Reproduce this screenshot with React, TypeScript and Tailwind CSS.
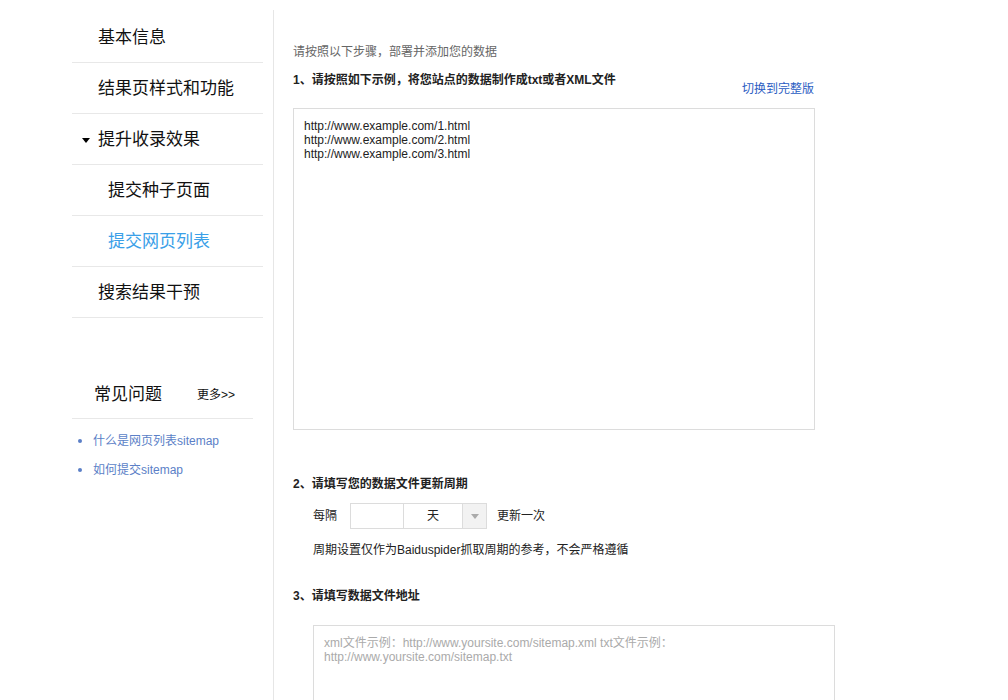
import React from "react";

const F = { fontFamily: '"Liberation Sans", Arial, "Noto Sans CJK SC", sans-serif' };

function NavItem({ label, indent = false, active = false, caret = false }: { label: string; indent?: boolean; active?: boolean; caret?: boolean }) {
  return (
    <div className="h-[51px] border-b border-[#e8e8e8] flex items-center pt-[2px]">
      <div className={`flex items-center ${indent ? "pl-[36px]" : caret ? "pl-[10px]" : "pl-[26px]"}`}>
        {caret && (
          <svg width="8" height="5" viewBox="0 0 8 5" className="mr-[8px]">
            <path d="M0 0 L8 0 L4 5 Z" fill="#000" />
          </svg>
        )}
        <span className={`text-[17px] ${active ? "text-[#3aa0e8]" : "text-[#111]"}`}>{label}</span>
      </div>
    </div>
  );
}

export default function App() {
  return (
    <div className="w-[1008px] h-[700px] overflow-hidden bg-white flex" style={F}>
      <aside className="w-[273px] shrink-0 pl-[72px] pr-[10px] pt-[12px]">
        <NavItem label="基本信息" />
        <NavItem label="结果页样式和功能" />
        <NavItem label="提升收录效果" caret />
        <NavItem label="提交种子页面" indent />
        <NavItem label="提交网页列表" indent active />
        <NavItem label="搜索结果干预" />
        <div className="mt-[50px] mr-[10px]">
          <div className="h-[51px] border-b border-[#e8e8e8] flex items-center pl-[22px] pt-[4px]">
            <span className="text-[17px] text-[#111] w-[103px]">常见问题</span>
            <span className="text-[12px] text-[#111]">更多&gt;&gt;</span>
          </div>
          <ul className="pt-[7px] text-[12px] text-[#5b7fc7]">
            <li className="h-[29px] flex items-center pl-[6px]">
              <span className="w-[4px] h-[4px] rounded-full bg-[#5b7fc7] mr-[11px]" />
              什么是网页列表sitemap
            </li>
            <li className="h-[29px] flex items-center pl-[6px]">
              <span className="w-[4px] h-[4px] rounded-full bg-[#5b7fc7] mr-[11px]" />
              如何提交sitemap
            </li>
          </ul>
        </div>
      </aside>
      <div className="w-px bg-[#e6e6e6] mt-[10px] shrink-0" />
      <main className="pl-[19px] pt-[44px] text-[12px] text-[#333]">
        <p className="text-[#666] leading-[16px]">请按照以下步骤，部署并添加您的数据</p>
        <p className="font-bold text-[#222] mt-[12px] leading-[16px]">1、请按照如下示例，将您站点的数据制作成txt或者XML文件</p>
        <div className="w-[522px] flex justify-end pr-[1px] mt-[-7px]">
          <span className="text-[#2a5cc2] leading-[16px]">切换到完整版</span>
        </div>
        <div className="w-[522px] h-[322px] border border-[#dcdcdc] mt-[11px] pl-[10px] pt-[10px] leading-[14px] text-[#222]">
          <div>http://www.example.com/1.html</div>
          <div>http://www.example.com/2.html</div>
          <div>http://www.example.com/3.html</div>
        </div>
        <p className="font-bold text-[#222] mt-[46px] leading-[16px]">2、请填写您的数据文件更新周期</p>
        <div className="flex items-center mt-[11px] pl-[20px]">
          <span className="text-[#222] w-[37px]">每隔</span>
          <div className="flex h-[26px] border border-[#dcdcdc]">
            <div className="w-[53px] border-r border-[#dcdcdc]" />
            <div className="w-[59px] border-r border-[#dcdcdc] flex items-center justify-center text-[#222]">天</div>
            <div className="w-[23px] bg-[#f2f2f2] flex items-center justify-center">
              <svg width="8" height="5" viewBox="0 0 8 5"><path d="M0 0 L8 0 L4 5 Z" fill="#aaa" /></svg>
            </div>
          </div>
          <span className="text-[#222] ml-[10px]">更新一次</span>
        </div>
        <p className="text-[#222] mt-[13px] pl-[20px] leading-[16px]">周期设置仅作为Baiduspider抓取周期的参考，不会严格遵循</p>
        <p className="font-bold text-[#222] mt-[30px] leading-[16px]">3、请填写数据文件地址</p>
        <div className="ml-[20px] mt-[21px] w-[522px] h-[120px] border border-[#dcdcdc] pl-[10px] pt-[10px] leading-[14px] text-[#aaa]">
          <div>xml文件示例：http://www.yoursite.com/sitemap.xml txt文件示例：</div>
          <div>http://www.yoursite.com/sitemap.txt</div>
        </div>
      </main>
    </div>
  );
}
